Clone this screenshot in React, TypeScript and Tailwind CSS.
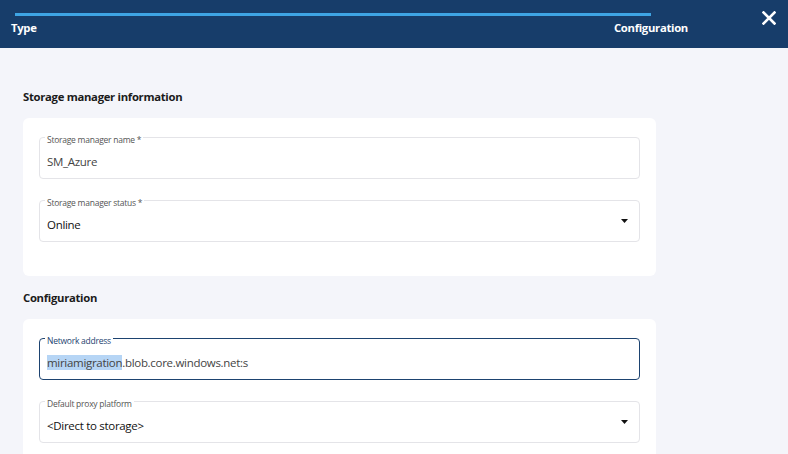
import React from 'react';

interface FieldProps {
  label: string;
  value: string;
  select?: boolean;
  focused?: boolean;
  highlight?: string;
}

const Field: React.FC<FieldProps> = ({ label, value, select, focused, highlight }) => {
  const rest = highlight ? value.slice(highlight.length) : value;
  return (
    <div
      className={`relative h-[42px] rounded-[4px] bg-white flex items-center pl-[7px] pr-[10px] pt-[8px] ${
        focused ? 'border-[1.5px] border-[#1d4370]' : 'border border-[#e4e4e8]'
      }`}
    >
      <span
        className={`absolute left-[5px] top-[-3px] bg-white px-[2px] text-[8.5px] leading-[10px] tracking-[-0.25px] ${
          focused ? 'text-[#1d4370]' : 'text-[#555]'
        }`}
      >
        {label}
      </span>
      <span className={`flex-1 text-[11.5px] leading-[16px] tracking-[-0.3px] ${select ? 'text-[#111]' : 'text-[#444]'}`}>
        {highlight && <span className="bg-[#b6d5f5]">{highlight}</span>}
        {rest}
      </span>
      {select && (
        <svg width="7" height="4" viewBox="0 0 7 4" className="mr-[1px] mb-[8px]">
          <path d="M0 0 L7 0 L3.5 4 Z" fill="#111" />
        </svg>
      )}
    </div>
  );
};

const Section: React.FC<{ title: string; children: React.ReactNode; last?: boolean }> = ({ title, children, last }) => (
  <div className={last ? '' : 'mb-[14px]'}>
    <h2 className="text-[11.3px] leading-[16px] font-bold tracking-[-0.3px] text-[#1b1b1b] mb-[13px]">{title}</h2>
    <div className="w-[633px] bg-white rounded-[6px] px-[16px] pt-[19px] pb-[34px] flex flex-col gap-[21px]">
      {children}
    </div>
  </div>
);

export default function App() {
  return (
    <div className="w-[788px] h-[454px] overflow-hidden bg-[#f4f5fa]" style={{ fontFamily: '"Open Sans", sans-serif' }}>
      {/* Wizard header */}
      <div className="h-[48px] bg-[#173d6a] flex items-start pl-[11px] pr-[12px]">
        <div className="w-[677px] pt-[13px]">
          <div className="ml-[4px] mr-[37px] h-[3px] bg-[#3ea5e4]" />
          <div className="flex justify-between mt-[4px] text-white text-[11.3px] font-bold tracking-[-0.3px] leading-[16px]">
            <span>Type</span>
            <span>Configuration</span>
          </div>
        </div>
        <div className="flex-1 flex justify-end pt-[11px]">
          <svg width="14" height="14" viewBox="0 0 14 14">
            <path d="M1.5 1.5 L12.5 12.5 M12.5 1.5 L1.5 12.5" stroke="white" strokeWidth="2.6" strokeLinecap="square" />
          </svg>
        </div>
      </div>

      {/* Form */}
      <div className="pl-[23px] pt-[41px]">
        <Section title="Storage manager information">
          <Field label="Storage manager name *" value="SM_Azure" />
          <Field label="Storage manager status *" value="Online" select />
        </Section>
        <Section title="Configuration" last>
          <Field
            label="Network address"
            value="miriamigration.blob.core.windows.net:s"
            highlight="miriamigration"
            focused
          />
          <Field label="Default proxy platform" value="<Direct to storage>" select />
        </Section>
      </div>
    </div>
  );
}
